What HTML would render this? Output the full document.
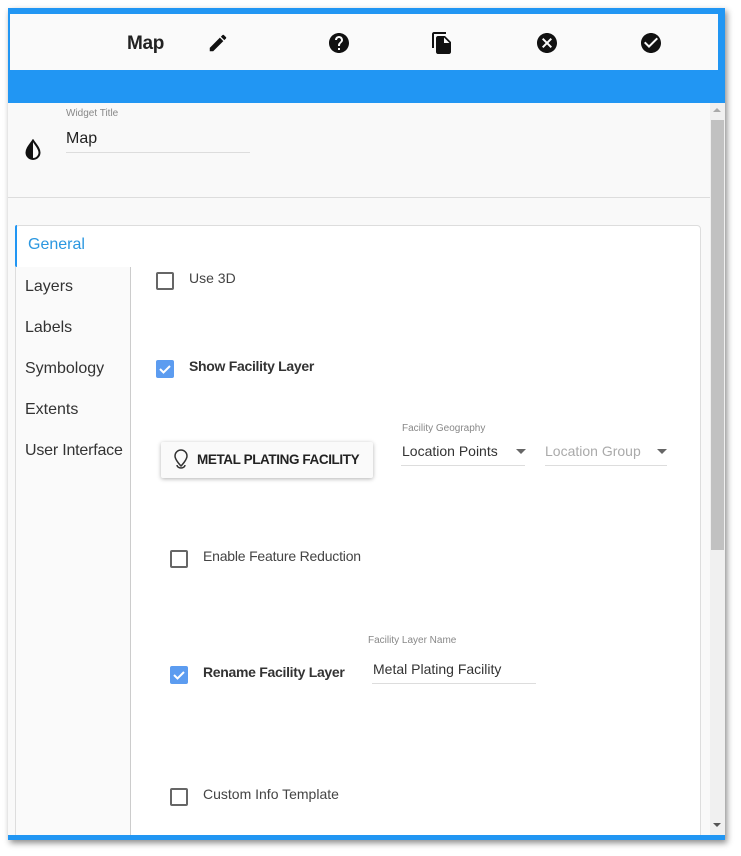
<!DOCTYPE html>
<html><head><style>
*{box-sizing:border-box;margin:0;padding:0}
body{width:741px;height:856px;background:#fff;font-family:"Liberation Sans",Arial,sans-serif;position:relative;overflow:hidden;color:#222}
.a{position:absolute}
.frame{left:8px;top:8px;width:717px;height:832px;background:#2196f3;box-shadow:2px 3px 6px rgba(0,0,0,.45)}
.cb{width:18px;height:18px;border:2px solid #666;border-radius:2px;background:#fff}
.cb.on{border:none;background:#5c9cf0}
.t14{font-size:14px}
.b{font-weight:bold;letter-spacing:-0.3px}
.lbl{font-size:10px;color:#888}
</style></head><body>
<div class="a frame"></div>
<div class="a" style="left:10px;top:14px;width:708px;height:56px;background:#fafafa"></div>
<div class="a" style="left:127px;top:33px;font-size:19px;font-weight:bold;color:#222;letter-spacing:-0.3px">Map</div>
<svg class="a" style="left:207px;top:32px" width="22" height="22" viewBox="0 0 24 24"><path d="M3 17.25V21h3.75L17.8 9.94l-3.75-3.75L3 17.25zM20.7 7.04a1 1 0 000-1.41l-2.34-2.34a1 1 0 00-1.41 0l-1.83 1.83 3.75 3.75 1.83-1.83z" fill="#111"/></svg>
<svg class="a" style="left:327px;top:31px" width="24" height="24" viewBox="0 0 24 24"><path d="M12 2C6.48 2 2 6.48 2 12s4.48 10 10 10 10-4.48 10-10S17.52 2 12 2zm1 17h-2v-2h2v2zm2.07-7.75l-.9.92C13.45 12.9 13 13.5 13 15h-2v-.5c0-1.1.45-2.1 1.17-2.830l1.24-1.26c.37-.36.59-.86.59-1.41 0-1.1-.9-2-2-2s-2 .9-2 2H8c0-2.21 1.790-4 4-4s4 1.79 4 4c0 .88-.36 1.68-.93 2.25z" fill="#111"/></svg>
<svg class="a" style="left:430px;top:31px" width="24" height="24" viewBox="0 0 24 24"><path d="M16 1H4c-1.1 0-2 .9-2 2v14h2V3h12V1zm-1 4l6 6v10c0 1.1-.9 2-2 2H7.99C6.89 23 6 22.1 6 21l.01-14c0-1.1.89-2 1.99-2h7zm-1 7h5.5L14 6.5V12z" fill="#111"/></svg>
<svg class="a" style="left:535px;top:31px" width="24" height="24" viewBox="0 0 24 24"><path d="M12 2C6.47 2 2 6.47 2 12s4.47 10 10 10 10-4.470 10-10S17.53 2 12 2zm5 13.59L15.59 17 12 13.41 8.41 17 7 15.59 10.59 12 7 8.41 8.41 7 12 10.59 15.59 7 17 8.41 13.41 12 17 15.59z" fill="#111"/></svg>
<svg class="a" style="left:639px;top:31px" width="24" height="24" viewBox="0 0 24 24"><path d="M12 2C6.48 2 2 6.48 2 12s4.48 10 10 10 10-4.48 10-10S17.52 2 12 2zm-2 15l-5-5 1.41-1.41L10 14.17l7.59-7.59L19 8l-9 9z" fill="#111"/></svg>
<div class="a" style="left:8px;top:103px;width:702px;height:732px;background:#f9f9f9;overflow:hidden">
  <div class="a" style="left:7px;top:122px;width:686px;height:640px;background:#fff;border:1px solid #ddd;border-radius:4px"></div>
  <div class="a" style="left:8px;top:164px;width:115px;height:600px;background:#fafafa;border-right:1px solid #ccc"></div>
  <div class="a" style="left:7px;top:122px;width:2px;height:42px;background:#2196f3;border-radius:2px 0 0 2px"></div>
</div>
<div class="a" style="left:710px;top:103px;width:15px;height:732px;background:#f0f0f0"></div>
<div class="a" style="left:711px;top:120px;width:13px;height:430px;background:#c1c1c1"></div>
<div class="a" style="left:713px;top:108px;width:0;height:0;border-left:4px solid transparent;border-right:4px solid transparent;border-bottom:4px solid #aaa"></div>
<div class="a" style="left:713px;top:823px;width:0;height:0;border-left:4px solid transparent;border-right:4px solid transparent;border-top:4px solid #555"></div>
<svg class="a" style="left:23px;top:139px" width="20" height="22" viewBox="0 0 20 22"><path d="M10 1.5C7 6 3.5 9.5 3.5 13.5a6.5 6.5 0 0013 0C16.5 9.5 13 6 10 1.5z" stroke="#111" stroke-width="2" fill="none"/><path d="M10 2v18a6.5 6.5 0 01-6.5-6.5C3.5 9.5 7 6 10 2z" fill="#111"/></svg>
<div class="a lbl" style="left:66px;top:108px">Widget Title</div>
<div class="a" style="left:66px;top:130px;font-size:16px">Map</div>
<div class="a" style="left:66px;top:152px;width:184px;height:1px;background:#ddd"></div>
<div class="a" style="left:8px;top:197px;width:702px;height:1px;background:#ddd"></div>
<div class="a" style="left:28px;top:236px;font-size:16px;color:#2b97e0">General</div>
<div class="a" style="left:25px;top:278px;font-size:16px;color:#333">Layers</div>
<div class="a" style="left:25px;top:319px;font-size:16px;color:#333">Labels</div>
<div class="a" style="left:25px;top:360px;font-size:16px;color:#333">Symbology</div>
<div class="a" style="left:25px;top:401px;font-size:16px;color:#333">Extents</div>
<div class="a" style="left:25px;top:442px;font-size:16px;color:#333;letter-spacing:-0.2px">User Interface</div>
<div class="a cb" style="left:156px;top:272px"></div>
<div class="a t14" style="left:189px;top:270px;color:#444">Use 3D</div>
<div class="a cb on" style="left:156px;top:360px"><svg width="18" height="18" viewBox="0 0 18 18"><path d="M4 9l3.5 3.5L14 6" stroke="#fff" stroke-width="2" fill="none"/></svg></div>
<div class="a t14 b" style="left:189px;top:358px;color:#333">Show Facility Layer</div>
<div class="a" style="left:161px;top:442px;width:212px;height:36px;background:#fafafa;box-shadow:0 1px 4px rgba(0,0,0,.3);border-radius:2px"></div>
<svg class="a" style="left:171px;top:448px" width="20" height="26" viewBox="0 0 20 26"><path d="M10 2a6 6 0 00-6 6c0 4 6 10 6 10s6-6 6-10a6 6 0 00-6-6z" stroke="#333" stroke-width="1.5" fill="none"/><path d="M6 17a4 3 0 108 0" stroke="#333" stroke-width="1.5" fill="none"/></svg>
<div class="a" style="left:197px;top:452px;font-size:13.5px;font-weight:bold;color:#222;letter-spacing:-0.4px">METAL PLATING FACILITY</div>
<div class="a lbl" style="left:402px;top:423px">Facility Geography</div>
<div class="a" style="left:402px;top:443px;font-size:14px;color:#333">Location Points</div>
<div class="a" style="left:516px;top:449px;border-left:5px solid transparent;border-right:5px solid transparent;border-top:5px solid #666"></div>
<div class="a" style="left:401px;top:465px;width:124px;height:1px;background:#ddd"></div>
<div class="a" style="left:545px;top:443px;font-size:14px;color:#aaa">Location Group</div>
<div class="a" style="left:657px;top:449px;border-left:5px solid transparent;border-right:5px solid transparent;border-top:5px solid #666"></div>
<div class="a" style="left:545px;top:465px;width:122px;height:1px;background:#ddd"></div>
<div class="a cb" style="left:170px;top:550px"></div>
<div class="a t14" style="left:203px;top:548px;color:#444;letter-spacing:-0.2px">Enable Feature Reduction</div>
<div class="a cb on" style="left:170px;top:666px"><svg width="18" height="18" viewBox="0 0 18 18"><path d="M4 9l3.5 3.5L14 6" stroke="#fff" stroke-width="2" fill="none"/></svg></div>
<div class="a t14 b" style="left:203px;top:664px;color:#333">Rename Facility Layer</div>
<div class="a lbl" style="left:368px;top:635px">Facility Layer Name</div>
<div class="a t14" style="left:373px;top:661px;color:#333">Metal Plating Facility</div>
<div class="a" style="left:372px;top:683px;width:164px;height:1px;background:#ddd"></div>
<div class="a cb" style="left:170px;top:788px"></div>
<div class="a t14" style="left:203px;top:786px;color:#444">Custom Info Template</div>
</body></html>
